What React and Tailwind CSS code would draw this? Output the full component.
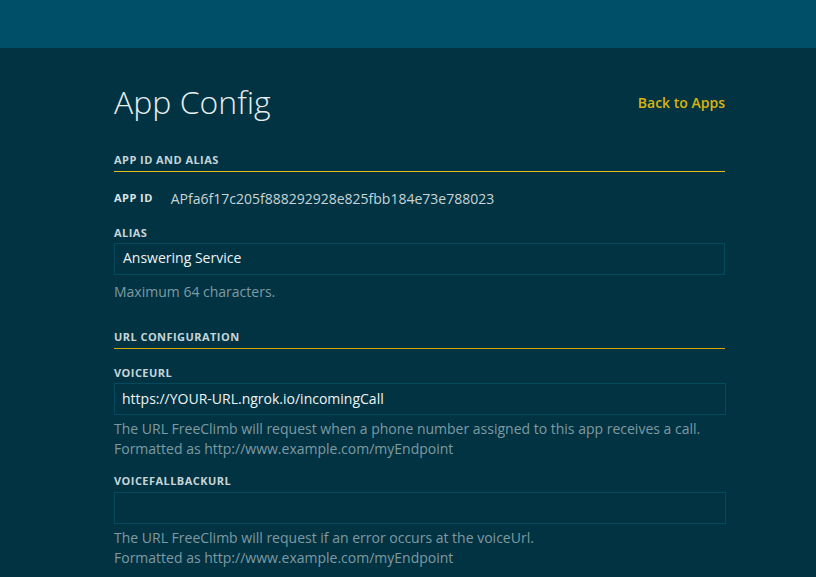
function Field({ label, value, help, labelGap = "mt-[3px]", helpGap = "mt-[4px]", inputWidth = "w-[612px]", inputPad = "px-[7px]", inputLeading = "leading-[30px]" }) {
	return (
		<div>
			<div className="text-[11px] font-bold tracking-[0.45px] text-[#c6d5d9] leading-[14px]">{label}</div>
			<div className={`${labelGap} ${inputWidth} ${inputPad} ${inputLeading} h-[32px] border border-[#044a5e] bg-[#023342] text-[14px] text-[#eef3f5]`}>{value}</div>
			<div className={`${helpGap} text-[14px] leading-[20px] text-[#7e9aa2]`}>{help}</div>
		</div>
	);
}

export default function App() {
	return (
		<div className="h-[577px] overflow-hidden bg-[#023342] font-['Open_Sans',sans-serif]">
			<div className="h-[48px] bg-[#004f68]" />
			<div className="mx-[114px] w-[611px]">
				<div className="flex items-center justify-between pt-[30px]">
					<h1 className="text-[32px] font-light leading-[48px] text-[#e6eef0]">App Config</h1>
					<a className="text-[14px] font-semibold text-[#d9b310]">Back to Apps</a>
				</div>
				<div className="mt-[26px] pb-[3px] text-[11px] font-bold tracking-[0.45px] text-[#c6d5d9] leading-[16px]">APP ID AND ALIAS</div>
				<div className="h-px bg-[#e3bd1a]" />
				<div className="mt-[16px] flex items-center gap-[18px]">
					<span className="text-[11px] font-bold tracking-[0.45px] text-[#dbe5e8]">APP ID</span>
					<span className="text-[14px] text-[#c6d5d9]">APfa6f17c205f888292928e825fbb184e73e788023</span>
				</div>
				<div className="mt-[17px]">
					<Field label="ALIAS" value="Answering Service" help="Maximum 64 characters." helpGap="mt-[7px]" inputWidth="w-[611px]" inputPad="px-[8px]" inputLeading="leading-[28px]" />
				</div>
				<div className="mt-[27px] pb-[3px] text-[11px] font-bold tracking-[0.45px] text-[#c6d5d9] leading-[16px]">URL CONFIGURATION</div>
				<div className="h-px bg-[#d4a900]" />
				<div className="mt-[17px]">
					<Field
						label="VOICEURL"
						value="https://YOUR-URL.ngrok.io/incomingCall"
						help={<>The URL FreeClimb will request when a phone number assigned to this app receives a call.<br />Formatted as http://www.example.com/myEndpoint</>}
					/>
				</div>
				<div className="mt-[15px]">
					<Field
						label="VOICEFALLBACKURL"
						value=""
						labelGap="mt-[4px]"
						help={<>The URL FreeClimb will request if an error occurs at the voiceUrl.<br />Formatted as http://www.example.com/myEndpoint</>}
					/>
				</div>
			</div>
		</div>
	);
}
